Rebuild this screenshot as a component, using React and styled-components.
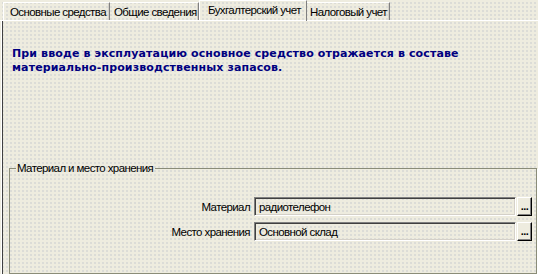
import React from "react";
import styled, { createGlobalStyle } from "styled-components";

const Global = createGlobalStyle`
  html, body { margin: 0; padding: 0; }
  body {
    background: #EEECDF;
    font-family: "Liberation Sans", Arial, sans-serif;
    font-size: 11.5px;
    letter-spacing: -0.6px;
    color: #000;
  }
`;

const Window = styled.div`
  width: 538px;
  height: 274px;
  display: flex;
  flex-direction: column;
  overflow: hidden;
  background-color: #EEECDF;
  background-image: radial-gradient(circle, rgba(170, 175, 195, 0.4) 0.6px, transparent 0.9px);
  background-size: 4px 4px;
  background-position: 1px 1px;
`;

const TabStrip = styled.div`
  height: 20px;
  display: flex;
  align-items: flex-end;
  padding-left: 3px;
  border-bottom: 1px solid #fff;
  flex: none;
`;

const Tab = styled.div`
  box-sizing: border-box;
  width: ${(p) => p.$w}px;
  height: ${(p) => (p.$active ? 21 : 18)}px;
  margin-bottom: ${(p) => (p.$active ? -1 : 0)}px;
  padding-left: ${(p) => p.$pad}px;
  padding-top: 3px;
  border-top: 1px solid #fff;
  border-left: ${(p) => (p.$first || p.$active ? "1px solid #fff" : "none")};
  border-right: 1px solid #808080;
  box-shadow: ${(p) => (p.$active ? "none" : "inset -1px 0 0 #D4D0C8")};
  white-space: nowrap;
  line-height: 13px;
  position: relative;
  z-index: ${(p) => (p.$active ? 1 : 0)};
`;

const Panel = styled.div`
  flex: 1;
  display: flex;
  flex-direction: column;
  border-left: 1px solid #fff;
  margin-left: 1px;
  box-shadow: inset 1px 0 0 #404040;
  padding-left: 7px;
  padding-right: 1px;
`;

const Notice = styled.p`
  margin: 26px 0 0 3px;
  height: 115px;
  color: #000080;
  font-weight: bold;
  font-size: 11px;
  line-height: 14px;
  font-family: "DejaVu Sans", Verdana, sans-serif;
  letter-spacing: 0.12px;
`;

const Group = styled.fieldset`
  margin: 0;
  padding: 22px 4px 0 0;
  height: 112px;
  box-sizing: border-box;
  border: 1px solid #8A8C78;
  box-shadow: 1px 1px 0 #fff;
  display: flex;
  flex-direction: column;
  gap: 6px;
  min-width: 0;
`;

const Legend = styled.legend`
  padding: 0 2px 0 1px;
  margin-left: 6px;
  line-height: 13px;
`;

const Row = styled.div`
  display: flex;
  align-items: center;
  height: 19px;
`;

const Label = styled.label`
  width: 244px;
  text-align: right;
  padding-right: 4px;
  box-sizing: border-box;
  white-space: nowrap;
`;

const Field = styled.div`
  flex: 1;
  height: 19px;
  box-sizing: border-box;
  border-top: 1px solid #808080;
  border-left: 1px solid #808080;
  border-right: 1px solid #fff;
  border-bottom: 1px solid #fff;
  box-shadow: inset 1px 1px 0 #404040, inset -1px -1px 0 #D4D0C8;
  padding: 3px 0 0 4px;
  line-height: 13px;
  white-space: nowrap;
`;

const PickButton = styled.button`
  width: 15px;
  height: 19px;
  margin-left: 1px;
  box-sizing: border-box;
  padding: 0 0 2px 0;
  border-top: 1px solid #fff;
  border-left: 1px solid #fff;
  border-right: 1px solid #000;
  border-bottom: 1px solid #000;
  box-shadow: inset -1px -1px 0 #808080;
  background: #EEECDF;
  font-family: "Liberation Sans", Arial, sans-serif;
  font-weight: bold;
  font-size: 11px;
  line-height: 13px;
  letter-spacing: -0.5px;
  color: #000;
  display: flex;
  align-items: flex-end;
  justify-content: center;
`;

const tabs = [
  { label: "Основные средства", w: 107, pad: 6, first: true },
  { label: "Общие сведения", w: 89, pad: 4 },
  { label: "Бухгалтерский учет", w: 108, pad: 8, active: true },
  { label: "Налоговый учет", w: 83, pad: 3 },
];

export default function App() {
  return (
    <>
      <Global />
      <Window>
        <TabStrip>
          {tabs.map((t) => (
            <Tab key={t.label} $w={t.w} $pad={t.pad} $active={t.active} $first={t.first}>
              {t.label}
            </Tab>
          ))}
        </TabStrip>
        <Panel>
          <Notice>
            При вводе в эксплуатацию основное средство отражается в составе
            <br />
            материально-производственных запасов.
          </Notice>
          <Group>
            <Legend>Материал и место хранения</Legend>
            <Row>
              <Label>Материал</Label>
              <Field>радиотелефон</Field>
              <PickButton>...</PickButton>
            </Row>
            <Row>
              <Label>Место хранения</Label>
              <Field>Основной склад</Field>
              <PickButton>...</PickButton>
            </Row>
          </Group>
        </Panel>
      </Window>
    </>
  );
}
